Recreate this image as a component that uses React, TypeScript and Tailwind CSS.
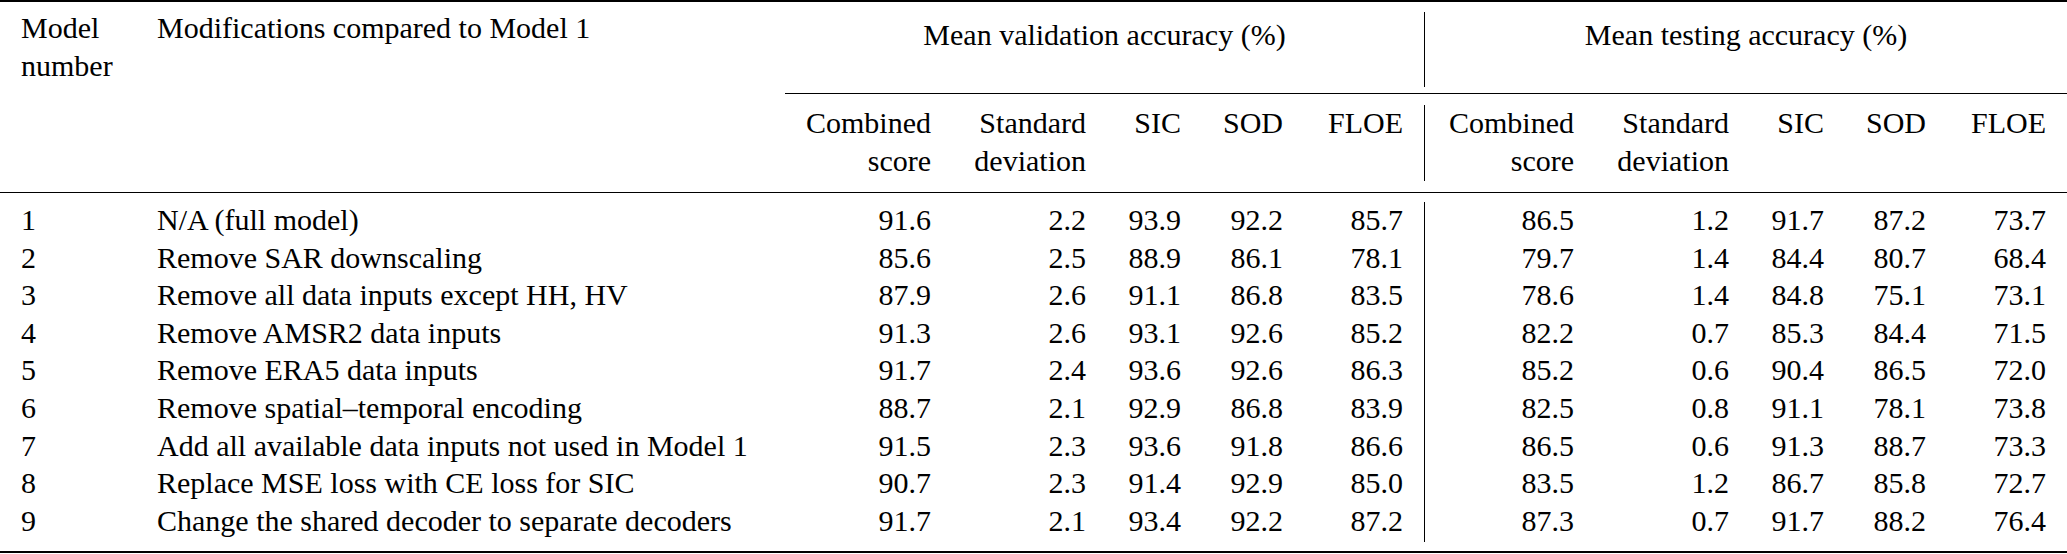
import React from 'react';

// column template shared by every band of the table (line column is the 8th)
const COLS = "grid grid-cols-[136px_649px_167px_155px_95px_102px_120px_1px_170px_155px_95px_102px_120px] font-['Liberation_Serif']";

type Row = {
  id: string;
  mod: string;
  val: string[]; // combined, std, SIC, SOD, FLOE
  test: string[];
};

const rows: Row[] = [
  { id: '1', mod: 'N/A (full model)', val: ['91.6', '2.2', '93.9', '92.2', '85.7'], test: ['86.5', '1.2', '91.7', '87.2', '73.7'] },
  { id: '2', mod: 'Remove SAR downscaling', val: ['85.6', '2.5', '88.9', '86.1', '78.1'], test: ['79.7', '1.4', '84.4', '80.7', '68.4'] },
  { id: '3', mod: 'Remove all data inputs except HH, HV', val: ['87.9', '2.6', '91.1', '86.8', '83.5'], test: ['78.6', '1.4', '84.8', '75.1', '73.1'] },
  { id: '4', mod: 'Remove AMSR2 data inputs', val: ['91.3', '2.6', '93.1', '92.6', '85.2'], test: ['82.2', '0.7', '85.3', '84.4', '71.5'] },
  { id: '5', mod: 'Remove ERA5 data inputs', val: ['91.7', '2.4', '93.6', '92.6', '86.3'], test: ['85.2', '0.6', '90.4', '86.5', '72.0'] },
  { id: '6', mod: 'Remove spatial–temporal encoding', val: ['88.7', '2.1', '92.9', '86.8', '83.9'], test: ['82.5', '0.8', '91.1', '78.1', '73.8'] },
  { id: '7', mod: 'Add all available data inputs not used in Model 1', val: ['91.5', '2.3', '93.6', '91.8', '86.6'], test: ['86.5', '0.6', '91.3', '88.7', '73.3'] },
  { id: '8', mod: 'Replace MSE loss with CE loss for SIC', val: ['90.7', '2.3', '91.4', '92.9', '85.0'], test: ['83.5', '1.2', '86.7', '85.8', '72.7'] },
  { id: '9', mod: 'Change the shared decoder to separate decoders', val: ['91.7', '2.1', '93.4', '92.2', '87.2'], test: ['87.3', '0.7', '91.7', '88.2', '76.4'] },
];

const SubHeads = () => (
  <>
    <div className="pr-[21px] text-right">Combined<br />score</div>
    <div className="pr-[21px] text-right">Standard<br />deviation</div>
    <div className="pr-[21px] text-right">SIC</div>
    <div className="pr-[21px] text-right">SOD</div>
    <div className="pr-[21px] text-right">FLOE</div>
  </>
);

export default function App() {
  return (
    <div className="w-[2067px] h-[554px] bg-white text-black text-[30px] leading-[37.6px] font-['Liberation_Serif']">
      {/* top rule */}
      <div className="h-[2px] bg-black" />

      {/* header band 1 */}
      <div className={`${COLS} h-[91px]`}>
        <div className="pl-[21px] pt-[7px]">Model<br />number</div>
        <div className="pl-[21px] pt-[7px] whitespace-nowrap">Modifications compared to Model 1</div>
        <div className="col-span-5 pt-[14px] text-center whitespace-nowrap">Mean validation accuracy (%)</div>
        <div className="mt-[10px] h-[75px] bg-black" />
        <div className="col-span-5 pt-[14px] text-center whitespace-nowrap">Mean testing accuracy (%)</div>
      </div>

      {/* cmidrule under both groups */}
      <div className={COLS}>
        <div className="col-start-3 col-span-11 h-px bg-black" />
      </div>

      {/* header band 2 */}
      <div className={`${COLS} h-[98px] pt-[10px]`}>
        <div />
        <div />
        <SubHeads />
        <div className="mt-px h-[76px] bg-black" />
        <SubHeads />
      </div>

      {/* midrule */}
      <div className="h-px bg-black" />

      {/* body: cells auto-flow around the vertical rule in column 8 */}
      <div className={`${COLS} grid-rows-[repeat(9,37.6px)] pt-[8px] pb-[12px]`}>
        <div className="col-start-8 row-start-1 row-span-9 mt-px -mb-[3px] bg-black" />
        {rows.map((r) => (
          <React.Fragment key={r.id}>
            <div className="pl-[21px]">{r.id}</div>
            <div className="pl-[21px] whitespace-nowrap">{r.mod}</div>
            {r.val.map((v, j) => (
              <div key={'v' + j} className="pr-[21px] text-right">{v}</div>
            ))}
            {r.test.map((v, j) => (
              <div key={'t' + j} className="pr-[21px] text-right">{v}</div>
            ))}
          </React.Fragment>
        ))}
      </div>

      {/* bottom rule */}
      <div className="h-[2px] bg-black" />
    </div>
  );
}
